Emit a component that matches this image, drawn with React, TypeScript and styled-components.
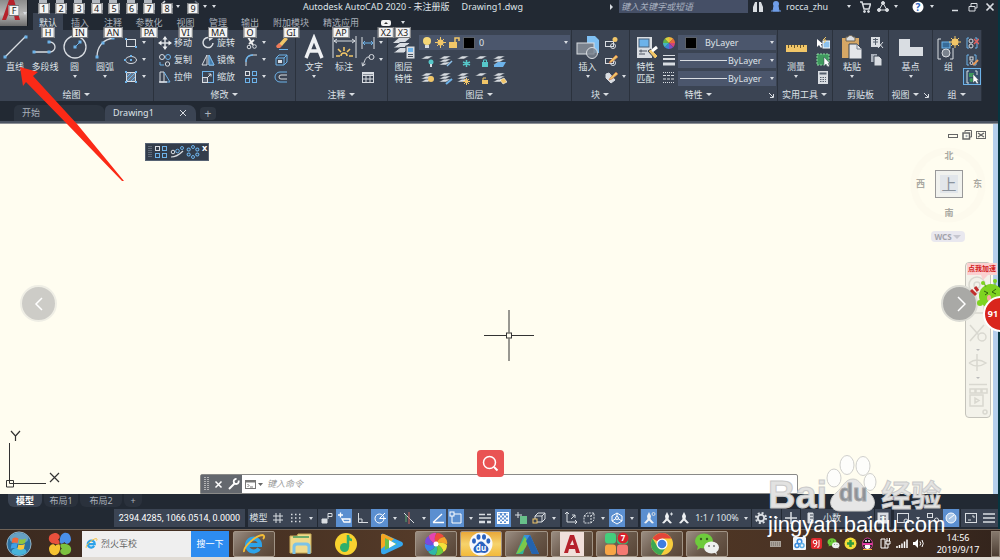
import React from 'react';
import styled, { createGlobalStyle, css } from 'styled-components';

const c = {
  dark: '#222933',
  panel: '#3b4453',
  field: '#4b566c',
  line: '#2b323d',
  text: '#dfe3e8',
  dim: '#a9b0ba',
  lt: '#d9dde2',
  blue: '#6db3ea',
  yellow: '#f1c668',
  active: '#5b8fd0',
  paper: '#fffdf0',
};

const Global = createGlobalStyle`
  * { box-sizing: border-box; }
  body { margin: 0; background: ${c.dark}; }
  body, button, input, select {
    font-family: "Noto Sans", "Noto Sans CJK SC", sans-serif;
    font-size: 9px;
    line-height: 12px;
  }
  button { border: 0; padding: 0; margin: 0; background: none; color: inherit; }
  svg { display: block; flex: none; }
`;

/* ---------- shared drawing helpers ---------- */

type SvgProps = { w?: number; h?: number; box?: string; children: React.ReactNode };
const Svg = ({ w = 14, h = 14, box, children }: SvgProps) => (
  <svg width={w} height={h} viewBox={box ?? `0 0 ${w} ${h}`} fill="none" stroke={c.lt} strokeWidth="1" aria-hidden="true">
    {children}
  </svg>
);

const Caret = styled.i<{ $w?: number }>`
  flex: none;
  width: ${(p) => p.$w ?? 8}px;
  height: 6px;
  display: flex;
  align-items: center;
  justify-content: center;
  &::before {
    content: '';
    border: 2px solid transparent;
    border-top: 3px solid ${c.lt};
    border-bottom: 0;
  }
`;

const Dots = ({ pts, s = 2 }: { pts: [number, number][]; s?: number }) => (
  <g fill={c.blue} stroke="none">
    {pts.map(([x, y]) => (
      <rect key={`${x}-${y}`} x={x - s / 2} y={y - s / 2} width={s} height={s} />
    ))}
  </g>
);

const Stack = ({ x = 0, y = 0, n = 3 }: { x?: number; y?: number; n?: number }) => (
  <g fill={c.lt} stroke={c.panel} strokeWidth=".5" transform={`translate(${x} ${y})`}>
    {Array.from({ length: n }, (_, i) => n - 1 - i).map((i) => (
      <path key={i} d={`M-1 ${3 + i * 3} L4 ${i * 3} H11 L6 ${3 + i * 3} Z`} />
    ))}
  </g>
);

/* ---------- ribbon icons ---------- */

const big = {
  line: <Svg w={26} h={26}><path d="M3 23 24 2" strokeWidth="1.3" /><Dots s={3} pts={[[3, 23], [24, 3]]} /></Svg>,
  pline: <Svg w={26} h={26}><path d="M2 18H18a5 5 0 0 0 0-10H17" strokeWidth="1.3" /><Dots s={3} pts={[[2, 18], [17, 18], [17, 8]]} /></Svg>,
  circle: <Svg w={26} h={26}><circle cx="13" cy="13" r="11" strokeWidth="1.3" /><path d="M13 13 18 8" stroke={c.blue} /><Dots s={3} pts={[[13, 13], [18, 8]]} /></Svg>,
  arc: <Svg w={26} h={26}><path d="M5 23C5 13 11 5 22 4" strokeWidth="1.3" /><Dots s={3} pts={[[5, 23], [11, 9], [21, 4]]} /></Svg>,
  text: <Svg w={26} h={26}><path d="M5 24 13 4 21 24M8 17H18" strokeWidth="3.400" stroke="#eef0f2" /></Svg>,
  dim: (
    <Svg w={26} h={26}>
      <path d="M2 2V24M25 2V24M3 7H24M6 5 3 7 6 9M21 5 24 7 21 9" />
      <path d="M5 22H9M18 22H22M13 13V17M7 15 10 18M19 15 16 18" stroke={c.yellow} strokeWidth="1.600" />
      <path d="M10 22a3 3 0 0 1 6 0" stroke={c.yellow} strokeWidth="1.500" />
    </Svg>
  ),
  layers: (
    <Svg w={26} h={26}>
      <g fill={c.lt} stroke="none"><path d="M2 9 9 3H20L13 9Z" /><path d="M2 14 9 8.500H20L13 14Z" stroke={c.panel} /><path d="M2 19 9 13.500H20L13 19Z" stroke={c.panel} /></g>
      <rect x="15" y="12" width="9" height="13" fill={c.lt} stroke={c.panel} /><rect x="17" y="14" width="5" height="4" fill={c.blue} stroke="none" /><path d="M17 20.500H22M17 22.500H22" stroke="#48515e" />
    </Svg>
  ),
  insert: (
    <Svg w={26} h={26}>
      <path d="M12 2H20L24 6V19H12Z" fill="#7fc0f3" stroke="none" />
      <rect x="2" y="9" width="17" height="11" fill="#7b838e" stroke={c.lt} />
      <circle cx="17" cy="19" r="5.500" fill="#7b838e" fillOpacity=".8" />
    </Svg>
  ),
  match: (
    <Svg w={26} h={26}>
      <rect x="4" y="3" width="15" height="21" fill={c.lt} stroke="none" /><rect x="6" y="5" width="10" height="8" fill={c.blue} stroke="#49617a" />
      <path d="M6 17H14M6 20H12M8 15.500V18.500" stroke="#48515e" />
      <path d="M15 17 18 15 25 22 22 25Z" fill={c.yellow} stroke={c.panel} /><path d="M19 17 24 13" stroke="#fff" strokeWidth="3" />
    </Svg>
  ),
  ruler: <Svg w={26} h={26}><rect x="3" y="11" width="21" height="7" fill={c.yellow} stroke="none" /><path d="M5.500 11V14M8.500 11V13M11.500 11V14M14.500 11V13M17.500 11V14M20.500 11V13" stroke="#6d5a2c" /></Svg>,
  paste: (
    <Svg w={26} h={26}>
      <rect x="3" y="4" width="17" height="20" fill="#d6a765" stroke="none" /><path d="M7 3H9C9 1 14 1 14 3H16V7H7Z" fill="#d9dde2" stroke="#6d6250" />
      <path d="M10 10H18L23 15V25H10Z" fill="#e4e6e9" stroke={c.panel} /><path d="M18 10V15H23" stroke="#78808c" />
    </Svg>
  ),
  base: <Svg w={26} h={26}><path d="M1 5H12V13H25V22H1Z" fill={c.lt} stroke="none" /></Svg>,
  group: (
    <Svg w={26} h={26}>
      <path d="M5 5H2V25H5M14 25H17V14" /><rect x="6" y="8" width="8" height="6" fill="#376b98" stroke={c.blue} />
      <circle cx="10" cy="19" r="4" fill="#7b838e" /><circle cx="19" cy="8" r="3.500" fill={c.yellow} stroke="none" />
      <path d="M19 2V14M13 8H25M15 4 23 12M23 4 15 12" stroke={c.yellow} />
    </Svg>
  ),
};

const pencil = <path d="M6 8 12 2 14 4 8 9 5 10Z" fill={c.yellow} stroke="#c96a42" strokeWidth=".6" />;
const cursor = <path d="M8 4V13L10 11 12 14 13.500 13 12 10.500H14Z" fill="#fff" stroke={c.panel} strokeWidth=".5" />;

const sm = {
  rect: <Svg><rect x="2.500" y="3.500" width="9" height="7" /><Dots pts={[[2, 3], [12, 11]]} /></Svg>,
  ellipse: <Svg><ellipse cx="7" cy="7" rx="5.500" ry="3.500" /><Dots pts={[[7, 7], [1, 7], [7, 3]]} /></Svg>,
  hatch: <Svg><rect x="2.500" y="2.500" width="9" height="9" fill="#66788d" /><path d="M3 7 7 3M3 11 11 3M7 11 11 7" stroke={c.blue} /><Dots pts={[[2, 2], [12, 2], [2, 12], [12, 12]]} /></Svg>,
  move: <Svg><path d="M7 2V12M2 7H12" strokeWidth="1.500" /><path d="M7 0 9.500 3.500H4.500ZM7 14 4.500 10.500H9.500ZM0 7 3.500 4.500V9.500ZM14 7 10.500 9.500V4.500Z" fill="#eef0f2" stroke="none" /></Svg>,
  rotate: <Svg><path d="M9 2A5 5 0 1 0 12 7" strokeWidth="1.500" /><path d="M8 0 12 2.500 8 5Z" fill={c.lt} stroke="none" /></Svg>,
  trim: <Svg><path d="M4 1 9 9M10 4 5 8" strokeWidth="2" stroke="#f0f0f0" /><circle cx="5" cy="11" r="1.800" /><circle cx="10.500" cy="10.500" r="1.800" /></Svg>,
  erase: <Svg><path d="M4 9 11 1 14 3 8 10Z" fill={c.yellow} stroke="none" /><path d="M2 10 5 7 8 10 6 12H3Z" fill="#ef7b5a" stroke="none" /><path d="M5 13.500H14" stroke={c.blue} /></Svg>,
  copy: <Svg><circle cx="4" cy="4" r="2.500" /><circle cx="10" cy="4" r="2.500" stroke={c.blue} /><path d="M2 9V12H6" stroke={c.blue} /><circle cx="9.500" cy="11" r="2.200" /></Svg>,
  mirror: <Svg><path d="M6 2V12H1ZM8 2V12H13Z" /><path d="M8 2V12H13Z" fill="#467ba8" stroke={c.blue} /></Svg>,
  fillet: <Svg><path d="M2 13V9C2 4 5 2 9 2H13" /><path d="M2 9C2 4 5 2 9 2" stroke={c.blue} strokeWidth="1.500" /></Svg>,
  explode: <Svg><path d="M2 5 5 2H13V9L10 12H2ZM2 5H10V12M10 5 13 2" stroke={c.blue} /><rect x="4" y="7" width="4" height="3" fill={c.lt} stroke="none" /></Svg>,
  stretch: <Svg><path d="M2 2H6V12H2Z" /><path d="M6 2 12 12H6" stroke={c.blue} /><path d="M1 12H9" strokeWidth="1.500" /></Svg>,
  scale: <Svg><rect x="1.500" y="1.500" width="11" height="11" stroke={c.blue} /><rect x="1.500" y="7.500" width="5" height="5" fill="#5a6474" /><path d="M7 7 10 4M7.500 4H10V6.500" /></Svg>,
  array: <Svg><g stroke={c.blue}><rect x="1.500" y="1.500" width="4" height="4" stroke={c.lt} /><rect x="8.500" y="1.500" width="4" height="4" /><rect x="1.500" y="8.500" width="4" height="4" /><rect x="8.500" y="8.500" width="4" height="4" /></g></Svg>,
  offset: <Svg><path d="M13 2H6A5 5 0 0 0 6 12H13" stroke={c.blue} /><path d="M13 5H7A2 2 0 0 0 7 9H13" /></Svg>,
  linear: <Svg><path d="M1 1V13M13 1V13" /><path d="M2 7H12M4 5 2 7 4 9M10 5 12 7 10 9" stroke={c.blue} /></Svg>,
  leader: <Svg><circle cx="10.500" cy="4" r="2.500" /><path d="M8 4C4 4 4 8 2 12M1 9.500 1.500 13 4.500 11" /></Svg>,
  table: <Svg><rect x="1.500" y="2.500" width="11" height="10" /><path d="M1 5.500H13M1 9H13M5 5V12M9 5V12" /><path d="M2 3.500H12" strokeWidth="2" /></Svg>,
  blkNew: <Svg><rect x="1.500" y="5.500" width="8" height="5" /><circle cx="9" cy="10" r="2.500" /><circle cx="11" cy="3.500" r="2.500" fill={c.yellow} stroke="none" /></Svg>,
  blkEdit: <Svg><rect x="1.500" y="5.500" width="8" height="5" /><circle cx="9" cy="10" r="2.500" />{pencil}</Svg>,
  blkAttr: <Svg><path d="M2 4 5 3 11 10 7 13 2 8Z" fill={c.lt} />{pencil}</Svg>,
  select: <Svg><rect x="7" y="5" width="7" height="7" fill="#8cc1ec" stroke="#fff" /><path d="M10 1 7 4H10L8 7" stroke={c.yellow} /><path d="M1 3V11L3 9 5 12 6 11 5 8H7Z" fill="#fff" stroke="none" /></Svg>,
  quick: <Svg><rect x="1" y="1" width="12" height="11" fill="#3f9a5e" stroke="#8fd6a2" strokeDasharray="2 1" />{cursor}</Svg>,
  calc: <Svg><rect x="2" y="1" width="10" height="13" fill={c.lt} stroke="none" /><rect x="3.500" y="2.500" width="7" height="2" fill="#56606e" stroke="none" /><path d="M4 7.500H10M4 9.500H10M4 11.500H10" stroke="#56606e" strokeDasharray="1.500 1" /></Svg>,
  cut: <Svg><path d="M1 1H10V11H1Z" fill={c.lt} stroke="none" /><path d="M3 3.500H8M3 6H8M5.500 2V9" stroke="#56606e" /><path d="M8 6 13 12M13 6 8 12" /></Svg>,
  copyDoc: <Svg><path d="M1 1H7V9H1Z" fill="#aab1bb" stroke="none" /><path d="M4 3H9L12 6V13H4Z" fill={c.lt} stroke={c.panel} /></Svg>,
  ungroup: <Svg><path d="M4 2H2V12H4M10 12H12V2H10" stroke={c.blue} /><circle cx="6" cy="5" r="2" /><circle cx="6" cy="10" r="2" /><path d="M9 3 14 8M14 3 9 8" stroke="#e06060" strokeWidth="1.500" /></Svg>,
  grpEdit: <Svg><path d="M4 2H2V12H4M9 2H11V12H9" stroke={c.blue} /><rect x="5" y="4" width="3" height="3" /><circle cx="6.500" cy="10" r="1.500" /><path d="M8 12 13 7" stroke="#e89a5a" strokeWidth="2" /></Svg>,
  grpSel: <Svg><path d="M4 1H2V13H4M10 1H12V5" /><rect x="4" y="3" width="5" height="4" fill="#3f9a5e" stroke="none" /><circle cx="6.500" cy="10" r="2" fill="#3f9a5e" stroke="none" />{cursor}</Svg>,
  wheel: (
    <Svg w={14} h={14}>
      <g stroke="none">
        {['#f3b13c', '#e8683c', '#d2447a', '#7c4fc2', '#3c7fd6', '#45b5c0', '#5fb54b', '#d7d13f'].map((f, i) => (
          <path key={f} fill={f} transform={`rotate(${i * 45} 7 7)`} d="M7 7V1A6 6 0 0 1 11.300 2.700Z" />
        ))}
      </g>
    </Svg>
  ),
  weight: <Svg><path d="M1 2.500H13" /><path d="M1 6H13" strokeWidth="2" /><path d="M1 11H13" strokeWidth="3" /></Svg>,
  ltype: <Svg><path d="M1 2.500H13M1 12.500H13" strokeDasharray="1 1" /><path d="M1 5.500H13M1 9H13" strokeDasharray="3 1" /></Svg>,
};

const layerIcon = (extra: React.ReactNode, n = 3, y = 2) => <Svg w={14} h={14}><Stack x={1} y={y} n={n} />{extra}</Svg>;
const layerRows = [
  [
    layerIcon(<><circle cx="10" cy="8" r="2.500" fill="#56c7c9" stroke="none" /><path d="M10 10V13" strokeWidth="2" /></>, 1),
    layerIcon(<path d="M8 12 13 7" stroke="#8cc1ec" strokeWidth="1.500" />),
    layerIcon(<path d="M9.500 6V13M6 8 13 11M13 8 6 11" stroke="#56c7c9" strokeWidth="1.500" />, 1),
    layerIcon(<><rect x="7" y="8" width="6" height="5" fill="#56c7c9" stroke="none" /><path d="M8.500 8V6H11.500V8" stroke="#56c7c9" /></>, 1),
    layerIcon(<path d="M1 11 5 8H13L10 13H1Z" fill={c.blue} stroke="none" />),
  ],
  [
    layerIcon(<circle cx="10" cy="8" r="3" fill={c.yellow} stroke="none" />),
    layerIcon(<path d="M7 13 13 8" stroke={c.blue} strokeWidth="2" />),
    layerIcon(<path d="M9.500 7V14M6 10.500H13M7 8 12 13M12 8 7 13" stroke={c.yellow} />),
    layerIcon(<><rect x="7" y="9" width="6" height="4" fill={c.yellow} stroke="none" /><path d="M8 9V7H11" stroke={c.yellow} /></>, 1),
    layerIcon(<path d="M7 9 11 7 14 11 10 13Z" fill={c.yellow} stroke="#fff" strokeWidth=".6" />),
  ],
];

/* ---------- window frame ---------- */

const Page = styled.div`
  position: relative;
  min-height: 100vh;
  display: flex;
  flex-direction: column;
  overflow: hidden;
  color: ${c.text};
`;
const Desktop = styled.div`
  flex: 1;
  display: flex;
  background: #063640;
  padding-right: 2px;
`;
const Cad = styled.main`
  flex: 1;
  min-width: 0;
  display: flex;
  flex-direction: column;
  background: ${c.dark};
`;

const Head = styled.header`
  display: flex;
  height: 30px;
`;
const AppButton = styled.button`
  width: 28px;
  height: 26px;
  display: flex;
  align-items: center;
  background: linear-gradient(#8b8b8b, #b9b9b9 55%, #6d6d6d);
  border-right: 1px solid #161a20;
  position: relative;
`;
const HeadRows = styled.div`
  flex: 1;
  min-width: 0;
`;
const TitleBar = styled.div`
  display: flex;
  align-items: center;
  height: 13px;
  padding-left: 7px;
  white-space: nowrap;
`;
const Chip = styled.span`
  position: absolute;
  z-index: 2;
  left: 50%;
  top: 3px;
  transform: translateX(-50%);
  min-width: 11px;
  padding: 0 2px;
  height: 11px;
  line-height: 9px;
  text-align: center;
  color: #222;
  background: #f4f4f4;
  border: 1px solid #77797c;
`;
const QatButton = styled.button<{ $w?: number }>`
  position: relative;
  flex: none;
  width: ${(p) => p.$w ?? 18}px;
  height: 13px;
  display: flex;
  justify-content: center;
  ${Chip} { top: 3px; }
`;
const Title = styled.h1`
  flex: 1;
  margin: 0;
  padding-left: 83px;
  font-size: 9px;
  font-weight: 400;
  line-height: 12px;
  display: flex;
  gap: 12px;
`;
const Search = styled.input`
  width: 129px;
  height: 13px;
  border: 0;
  padding: 0 2px;
  background: #454f66;
  font-style: italic;
  color: ${c.text};
  &::placeholder { color: #a9b1c0; }
`;
const TitleItem = styled.button<{ $w: number }>`
  flex: none;
  width: ${(p) => p.$w}px;
  height: 13px;
  display: flex;
  align-items: center;
  justify-content: center;
`;
const RibbonTabs = styled.nav`
  display: flex;
  height: 17px;
  padding-left: 5px;
`;
const RibbonTab = styled.button<{ $w: number; $on?: boolean }>`
  position: relative;
  flex: none;
  width: ${(p) => p.$w}px;
  height: 17px;
  padding-top: 2px;
  display: flex;
  align-items: center;
  justify-content: center;
  color: ${(p) => (p.$on ? c.text : c.dim)};
  background: ${(p) => (p.$on ? c.panel : 'none')};
  ${Chip} { top: 14px; }
`;

/* ---------- ribbon ---------- */

const Ribbon = styled.section`
  display: grid;
  grid-template-columns: 154fr 142fr 92fr 184fr 58fr 148fr 55fr 56fr 44fr 49fr;
  margin-right: 16px;
  height: 71px;
`;
const PanelBox = styled.section`
  display: flex;
  flex-direction: column;
  min-width: 0;
  background: ${c.panel};
  border-right: 1px solid ${c.line};
`;
const PanelBody = styled.div<{ $pad?: number }>`
  flex: 1;
  display: flex;
  align-items: flex-start;
  padding: 2px 0 0 ${(p) => p.$pad ?? 0}px;
`;
const PanelTitle = styled.footer<{ $launch?: boolean }>`
  position: relative;
  height: 13px;
  padding-right: ${(p) => (p.$launch ? 10 : 0)}px;
  display: flex;
  align-items: center;
  justify-content: center;
  gap: 2px;
  white-space: nowrap;
  ${Caret}::before { border-width: 3px 3px 0; }
`;
const Launcher = styled.button`
  position: absolute;
  right: 3px;
  top: 5px;
`;
const BigButton = styled.button<{ $w: number }>`
  flex: none;
  width: ${(p) => p.$w}px;
  display: flex;
  flex-direction: column;
  align-items: center;
  white-space: nowrap;
  padding-top: 2px;
  & > span { margin-top: 1px; }
  & > span + span { margin-top: 0; }
`;
const Col = styled.div<{ $ml?: number }>`
  flex: none;
  display: flex;
  flex-direction: column;
  margin: 2px 0 0 ${(p) => p.$ml ?? 0}px;
`;
const Small = styled.button<{ $on?: boolean }>`
  display: flex;
  align-items: center;
  height: 17px;
  white-space: nowrap;
  & > svg { margin: 0 2px; }
  ${(p) => p.$on && css`background: #35506b; box-shadow: inset 0 0 0 1px ${c.blue};`}
`;
const IconRow = styled.div`
  display: flex;
  height: 17px;
`;
const Field = styled.label<{ $w: number }>`
  display: flex;
  align-items: center;
  gap: 1px;
  width: ${(p) => p.$w}px;
  height: 15px;
  margin: 1px 0 2px;
  padding-left: 2px;
  background: ${c.field};
`;
const Drop = styled.select`
  flex: 1;
  min-width: 0;
  height: 15px;
  border: 0;
  padding: 0;
  appearance: none;
  background: none;
  color: ${c.text};
`;
const Swatch = styled.i`
  width: 12px;
  height: 12px;
  background: #000;
  border: 1px solid #5b6068;
  margin: 0 3px 0 2px;
`;
const Rule = styled.i`
  width: 47px;
  height: 1px;
  background: ${c.lt};
`;

const Panel = ({ title, pad, caret = true, launch, children }: { title: string; pad?: number; caret?: boolean; launch?: boolean; children: React.ReactNode }) => (
  <PanelBox>
    <PanelBody $pad={pad}>{children}</PanelBody>
    <PanelTitle $launch={launch}>
      {title}
      {caret && <Caret />}
      {launch && <Launcher aria-label={`${title}设置`}><Svg w={5} h={5}><path d="M0 0 4 4M4.500 1V4.500H1" /></Svg></Launcher>}
    </PanelTitle>
  </PanelBox>
);

const Big = ({ icon, label, w, caret }: { icon: keyof typeof big; label: string[]; w: number; caret?: boolean }) => (
  <BigButton $w={w}>
    {big[icon]}
    {label.map((t) => <span key={t}>{t}</span>)}
    {caret && <Caret />}
  </BigButton>
);
const Sm = ({ icon, label, caret, on }: { icon: keyof typeof sm; label?: string; caret?: boolean; on?: boolean }) => (
  <Small $on={on} aria-label={label ?? icon}>
    {sm[icon]}
    {label}
    {caret && <Caret />}
  </Small>
);

/* ---------- document tabs ---------- */

const DocTabs = styled.nav`
  display: flex;
  align-items: flex-end;
  height: 20px;
  padding-left: 14px;
`;
const DocTab = styled.button<{ $on?: boolean }>`
  width: 91px;
  height: 16px;
  display: flex;
  align-items: center;
  justify-content: space-between;
  padding: 0 8px;
  color: ${(p) => (p.$on ? c.text : c.dim)};
  background: ${(p) => (p.$on ? c.panel : '#2c343f')};
  border-radius: 5px 8px 0 0;
`;
const AddTab = styled.button`
  width: 16px;
  height: 13px;
  margin: 0 0 1px 4px;
  border-radius: 4px;
  background: #2f3742;
  color: ${c.dim};
  font-size: 12px;
`;
const CanvasTop = styled.div`
  height: 3px;
  background: #4b5361;
  border-bottom: 1px solid #8d9095;
`;

/* ---------- drawing canvas ---------- */

const CanvasRow = styled.div`
  flex: 1;
  display: flex;
  padding-right: 5px;
  background: #b5cfec;
`;
const Canvas = styled.section`
  position: relative;
  flex: 1;
  background: ${c.paper};
`;
const Float = styled.div<{ $l?: number; $r?: number; $t?: number; $b?: number }>`
  position: absolute;
  ${(p) => p.$l !== undefined && `left: ${p.$l}px;`}
  ${(p) => p.$r !== undefined && `right: ${p.$r}px;`}
  ${(p) => p.$t !== undefined && `top: ${p.$t}px;`}
  ${(p) => p.$b !== undefined && `bottom: ${p.$b}px;`}
`;
const MiniBar = styled(Float)`
  display: flex;
  align-items: center;
  gap: 2px;
  width: 64px;
  height: 18px;
  padding-left: 2px;
  background: #333d4b;
  border: 1px solid #566273;
`;
const MiniClose = styled.button`
  align-self: flex-start;
  font-size: 9px;
  font-weight: 700;
  line-height: 8px;
  color: #fff;
`;
const WinButtons = styled(Float)`
  display: flex;
  gap: 4px;
`;
const Compass = styled(Float)`
  display: grid;
  grid-template-columns: 15px 28px 15px;
  grid-template-rows: 15px 28px 15px;
  gap: 7px;
  place-items: center;
  justify-content: center;
  width: 74px;
  color: #aaa9a2;
  font-weight: 700;
`;
const North = styled.span`grid-area: 1 / 2;`;
const West = styled.span`grid-area: 2 / 1;`;
const East = styled.span`grid-area: 2 / 3;`;
const South = styled.span`grid-area: 3 / 2;`;
const Cube = styled.button`
  grid-area: 2 / 2;
  width: 28px;
  height: 28px;
  border: 1px solid #999;
  background: #e2e6ea;
  color: #8b939c;
  font-size: 15px;
  line-height: 20px;
  box-shadow: inset 0 0 0 4px #f1f2ee;
`;
const Wcs = styled.button`
  display: flex;
  align-items: center;
  justify-content: center;
  width: 34px;
  height: 11px;
  border-radius: 4px;
  background: #e9e8ef;
  color: #a3a3ab;
  font-size: 8px;
  font-weight: 700;
  ${Caret}::before { border-top-color: #c6c6cf; border-width: 4px 4px 0; }
`;
const NavBar = styled(Float)`
  width: 26px;
  height: 156px;
  border: 1px solid #c4c3bb;
  border-radius: 4px;
  background: #f3f2ea;
  display: flex;
  justify-content: center;
`;
const Round = styled.button<{ $soft?: boolean }>`
  width: 37px;
  height: 37px;
  border-radius: 50%;
  border: 2px solid ${(p) => (p.$soft ? '#efeee5' : '#dcdcd5')};
  background: ${(p) => (p.$soft ? '#cdccc7' : '#a9a9a6')};
  display: flex;
  align-items: center;
  justify-content: center;
`;
const RedSearch = styled.button`
  width: 27px;
  height: 27px;
  border-radius: 4px;
  background: #e95353;
  display: flex;
  align-items: center;
  justify-content: center;
`;
const Command = styled(Float)`
  right: 195px;
  display: flex;
  height: 20px;
  border: 1px solid #8a8a88;
  border-radius: 2px 2px 0 0;
  background: #fff;
`;
const CommandGrip = styled.div`
  width: 41px;
  display: flex;
  align-items: center;
  justify-content: space-around;
  background: #64686e;
`;
const CommandInput = styled.input`
  flex: 1;
  border: 0;
  padding: 0;
  background: none;
  &::placeholder { color: #9a9a9a; font-style: italic; }
`;

/* ---------- bottom bars ---------- */

const LayoutTabs = styled.nav`
  display: flex;
  height: 14px;
  padding-left: 8px;
`;
const LayoutTab = styled.button<{ $on?: boolean; $w: number }>`
  width: ${(p) => p.$w}px;
  height: 13px;
  border-radius: 0 0 6px 6px;
  color: ${(p) => (p.$on ? '#fff' : c.dim)};
  font-weight: ${(p) => (p.$on ? 700 : 400)};
  background: ${(p) => (p.$on ? c.panel : '#2a313c')};
  margin-right: 2px;
`;
const Status = styled.footer`
  display: flex;
  justify-content: flex-end;
  height: 21px;
  padding: 1px 0 2px;
  white-space: nowrap;
`;
const Coords = styled.output`
  width: 131px;
  margin-right: 3px;
  font-family: Roboto, sans-serif;
  line-height: 18px;
  text-align: center;
  color: #fff;
  background: ${c.panel};
`;
const StatusButton = styled.button<{ $w: number; $on?: boolean }>`
  flex: none;
  width: ${(p) => p.$w}px;
  height: 18px;
  display: flex;
  align-items: center;
  justify-content: center;
  background: ${c.panel};
  ${(p) => p.$on && css`background: ${c.active}; box-shadow: inset 1px 0 ${c.panel}, inset -1px 0 ${c.panel};`}
`;
const Gap = styled.i<{ $w: number }>`
  flex: none;
  width: ${(p) => p.$w}px;
`;

const Taskbar = styled.footer`
  display: flex;
  align-items: center;
  height: 28px;
  padding: 1px 0;
  background: linear-gradient(90deg, #3b2a20, #4a3324 30%, #5b402c 50%, #4d3524 72%, #4a3325 80%, #33241c);
  border-top: 1px solid #6f6257;
`;
const Task = styled.button<{ $w: number; $open?: boolean; $hot?: boolean }>`
  flex: none;
  width: ${(p) => p.$w}px;
  height: 26px;
  display: flex;
  align-items: center;
  justify-content: center;
  ${(p) => p.$open && css`
    margin-right: 3px;
    border: 1px solid #a09385;
    border-radius: 2px;
    background: linear-gradient(135deg, #9a8d82, #6b5a4c 50%, #584536);
  `}
  ${(p) => p.$hot && css`background: linear-gradient(#e8a73a, #f6d36c 50%, #f3b93a);`}
`;
const WebSearch = styled.form`
  display: flex;
  width: 147px;
  height: 26px;
  margin-right: 4px;
  background: #efefef;
  align-items: center;
  padding-left: 3px;
`;
const WebInput = styled.input`
  flex: 1;
  min-width: 0;
  border: 0;
  background: none;
  color: #666;
  padding: 0 3px;
`;
const WebGo = styled.button`
  width: 38px;
  height: 26px;
  background: #2d8cf0;
  color: #fff;
`;
const Tray = styled.div`
  margin-left: auto;
  display: flex;
  align-items: center;
  gap: 4px;
`;
const Clock = styled.time`
  width: 58px;
  text-align: center;
  color: #fff;
  & > span { display: block; }
`;
const ShowDesktop = styled.button`
  width: 9px;
  height: 26px;
  border: 1px solid #8d8073;
  background: linear-gradient(#85786c, #4c3d32);
`;
const Base = styled.div`
  height: 3px;
  background: #e0dbd4;
`;

/* ---------- watermark ---------- */

const Watermark = styled.div`
  position: absolute;
  right: 54px;
  bottom: 22px;
  width: 178px;
  color: #e2e2e1;
  font-family: "Liberation Sans", "Noto Sans CJK SC", sans-serif;
  pointer-events: none;
`;
const Brand = styled.div`
  display: flex;
  align-items: flex-end;
  height: 58px;
  font-weight: 700;
  font-size: 38px;
  line-height: 34px;
  white-space: nowrap;
  -webkit-text-stroke: 1px #c9c9c9;
`;
const BrandCjk = styled.span`
  margin-left: 4px;
  font-size: 30px;
  line-height: 32px;
`;
const Paw = styled.div`
  position: relative;
  width: 56px;
  height: 58px;
  margin-left: -6px;
`;
const Du = styled.span`
  position: absolute;
  inset: 22px 0 auto 8px;
  text-align: center;
  font-size: 23px;
  color: #8d9196;
  -webkit-text-stroke: 1px #a5a8ab;
`;
const Site = styled.div`
  height: 26px;
  font-size: 22px;
  line-height: 26px;
  color: #fff;
`;

/* ---------- data ---------- */

const disk = <Svg w={12} h={10}><path d="M1 0H9V3H12V10H4V8H1Z" fill="#b4b9c0" stroke="none" /></Svg>;
const undo = <Svg w={14} h={10}><path d="M2 4H9Q12 4 12 8M5 1 2 4 5 7" strokeWidth="1.500" /></Svg>;
const redo = <Svg w={14} h={10}><path d="M12 4H5Q2 4 2 8M9 1 12 4 9 7" strokeWidth="1.500" stroke="#6b7482" /></Svg>;
const qat: [string, number][] = [['1', 17], ['2', 18], ['3', 18], ['4', 17], ['5', 18], ['6', 17], ['7', 18], ['8', 18]];
const tabs: [string, string, number][] = [
  ['默认', 'H', 30], ['插入', 'IN', 34], ['注释', 'AN', 32], ['参数化', 'PA', 40], ['视图', 'VI', 33],
  ['管理', 'MA', 32], ['输出', 'O', 32], ['附加模块', 'GI', 50], ['精选应用', 'AP', 50],
];

type St = { w: number; on?: boolean; el: React.ReactNode };
const caret = (w: number): St => ({ w, el: <Caret /> });
const person = (extra?: React.ReactNode) => <Svg w={14} h={14}><path d="M7 1 9 5 8.500 8 12 12 10 12.500 7 9.500 4 12.500 2 12 5.500 8 5 5Z" fill="#eef0f2" stroke="none" />{extra}</Svg>;
const status: (St | number)[] = [
  { w: 21, el: '模型' }, { w: 18, el: <Svg w={12} h={12}><path d="M4 1V11M8 1V11M1 4H11M1 8H11" /></Svg> },
  { w: 18, el: <Svg w={12} h={12}><path d="M1 2.500H11M1 6H11M1 9.500H11" strokeWidth="1.500" strokeDasharray="1.500 2.500" /></Svg> }, caret(12), 1,
  { w: 17, el: <Svg w={12} h={12}><path d="M1 7H6V11H1Z" fill={c.lt} /><path d="M7 7V1.500H11V4.500H7" /></Svg> },
  { w: 18, on: true, el: <Svg w={14} h={14}><path d="M1 4H6M3.500 1.500V6.500M5 8H13V11H7Z" stroke="#fff" strokeWidth="1.300" /></Svg> },
  { w: 17, el: <Svg w={12} h={12}><path d="M2.500 1V10.500H12M2 7H6V11" /></Svg> },
  { w: 19, on: true, el: <Svg w={14} h={14}><circle cx="6.500" cy="7.500" r="4.500" stroke="#fff" /><path d="M6.500 7.500 12 2M6.500 7.500H13" stroke="#fff" /></Svg> }, caret(11),
  { w: 18, el: <Svg w={14} h={14}><path d="M2 2 12 12" /><path d="M7 1V13" stroke="#d0605a" /><path d="M4 4V11" stroke="#58a56a" /></Svg> }, caret(11),
  { w: 18, on: true, el: <Svg w={14} h={14}><path d="M2 11.500H13M2 11.500 11 3" stroke="#fff" strokeWidth="1.300" /></Svg> },
  { w: 18, on: true, el: <Svg w={14} h={14}><path d="M3 3H12V12H3Z" stroke="#fff" /><rect x="1" y="1" width="4" height="4" fill="#5b8fd0" stroke="#fff" /></Svg> }, caret(11),
  { w: 18, el: <Svg w={12} h={12}><path d="M0 2.500H6M8 2.500H12M0 6H12" strokeWidth="1.500" /><path d="M0 10H6M8 10H12" strokeWidth="2.500" /></Svg> },
  { w: 18, on: true, el: <Svg w={12} h={12}><rect x=".5" y=".5" width="11" height="11" stroke="#fff" /><path d="M1 2.500H11M1 6.500H11M1 10H11" strokeDasharray="2 2" stroke="#fff" strokeWidth="2" /><path d="M3 4.500H11M3 8.500H11" strokeDasharray="2 2" stroke="#fff" strokeWidth="2" /></Svg> },
  { w: 18, el: <Svg w={12} h={12}><rect x="5" y="4" width="7" height="8" fill="#68c08a" stroke="none" /><path d="M0 3H7M3 0V6" /></Svg> },
  { w: 18, el: <Svg w={14} h={14}><path d="M3 5 6 2H13V8L10 11H3ZM3 5H10V11M10 5 13 2" /><rect x="1" y="8" width="4" height="4" fill={c.panel} stroke={c.yellow} /></Svg> }, caret(12), 2,
  { w: 18, el: <Svg w={14} h={14}><path d="M3 1V11H13M1 3 3 1 5 3M11 9 13 11 11 13M7 8 11 4M8 4H11V7" /></Svg> },
  { w: 17, el: <Svg w={14} h={14}><path d="M2 5 5 2H12V9L9 12H2ZM2 5H9V12M9 5 12 2" strokeDasharray="2 1" /></Svg> }, caret(11),
  { w: 18, on: true, el: <Svg w={14} h={14}><path d="M7 2 12 5V10L7 13 2 10V5ZM7 2V7M2 10 7 7 12 10" stroke="#fff" /><circle cx="7" cy="7" r="1.500" stroke="#fff" fill="#5b8fd0" /></Svg> }, caret(12), 2,
  { w: 18, on: true, el: person(<circle cx="11.500" cy="3" r="1.500" />) }, { w: 17, el: person(<path d="M10 3H13M11.500 1.500V4.500" />) }, { w: 18, el: person() },
  { w: 48, el: '1:1 / 100%' }, caret(10), 1,
  { w: 18, el: <Svg w={14} h={14}><circle cx="7" cy="7" r="3.200" strokeWidth="2" /><circle cx="7" cy="7" r="5" strokeWidth="2" strokeDasharray="2 1.930" /></Svg> }, caret(11), 1,
  { w: 18, el: <Svg w={14} h={14}><path d="M7 1V13M1 7H13" strokeWidth="1.500" /></Svg> }, 1,
  { w: 18, el: <Svg w={12} h={12}><path d="M4 1H9V11H4Z" fill={c.lt} /><path d="M6 3H9M6 6H9M6 9H9" stroke={c.panel} /></Svg> },
  { w: 26, el: '小数' }, { w: 18, el: null }, caret(11), 1,
  { w: 16, el: <Svg w={12} h={12}><rect x="1" y="1" width="10" height="10" fill={c.lt} /><path d="M3 4H9M3 7H9M6 4V10" stroke={c.panel} /></Svg> }, 3,
  { w: 18, el: <Svg w={12} h={12}><rect x=".5" y="1.500" width="11" height="9" /><circle cx="9" cy="9" r="2" fill={c.panel} /></Svg> }, caret(12),
  { w: 18, el: <Svg w={14} h={14}><rect x="1.500" y="2.500" width="5" height="4" /><circle cx="10.500" cy="9" r="2" /></Svg> },
  { w: 18, on: true, el: <Svg w={14} h={14}><circle cx="7" cy="7" r="5" fill="#a8c6e8" stroke="#fff" /><path d="M5 8 10 4" stroke="#fff" /></Svg> }, 1,
  { w: 19, el: <Svg w={14} h={14}><rect x="1.500" y="2.500" width="11" height="9" /><path d="M4 9H7M10 5H8M10 5V7" /></Svg> },
  { w: 18, el: <Svg w={12} h={12}><path d="M0 2H12M0 6H12M0 10H12" strokeWidth="1.500" /></Svg> },
];

/* ---------- taskbar pictures ---------- */

const IeLogo = ({ s }: { s: number }) => (
  <Svg w={s} h={s} box="0 0 24 24">
    <path d="M5.500 13H18A6.500 6.500 0 1 0 17 16.500" stroke="#2ca3ea" strokeWidth="4" />
    <path d="M2 20C1 15 14 3 21 3C23 4 22 6 21 7" stroke="#f5bd35" strokeWidth="1.800" />
  </Svg>
);
const Petals = () => (
  <Svg w={24} h={24}>
    <g stroke="none">
      {['#e8503c', '#4a8fe8', '#7cc23f', '#f5c332'].map((f, i) => (
        <path key={f} fill={f} transform={`rotate(${i * 90} 12 12)`} d="M11.500 11.500C9 13 2 12 1 8C0 3 4 1 8 1C12 2 13 6 10 7.500C11 8 12 10 11.500 11.500Z" />
      ))}
    </g>
  </Svg>
);
const Orb = () => (
  <Svg w={28} h={26} box="0 0 28 28">
    <circle cx="14" cy="14" r="13" fill="#2b6f9f" stroke="#9bb9c9" />
    <ellipse cx="14" cy="8" rx="10" ry="6" fill="#8fc3dc" fillOpacity=".6" stroke="none" />
    <ellipse cx="14" cy="22" rx="8" ry="4" fill="#4fc6e8" fillOpacity=".8" stroke="none" />
    <g stroke="none"><path d="M7 8Q10 6 13.500 8L12.500 13Q9 11.500 6 13Z" fill="#f0683a" /><path d="M14.500 8.500Q18 10 21.500 8L20.500 13Q17 15 13.500 13.500Z" fill="#8fc63f" /><path d="M6 14Q9 12.500 12.300 14L11.300 19Q8 17.500 5 19Z" fill="#3fa0e8" /><path d="M13.300 14.500Q17 16 20.300 14L19.300 19Q16 21 12.300 19.500Z" fill="#fbc93a" /></g>
  </Svg>
);
const Folder = () => (
  <Svg w={24} h={22}><path d="M1 3H8L9 1H22V20H1Z" fill="#f0da8c" stroke="#c9ab56" /><path d="M4 4H20" stroke="#6cab6a" strokeWidth="2" /><path d="M5 21V14Q5 11 8 11H17Q20 11 20 14V21" stroke="#7cc3e8" strokeWidth="3" /></Svg>
);
const Music = () => (
  <Svg w={24} h={24}><circle cx="12" cy="12" r="11" fill="#f8d22f" stroke="none" /><circle cx="10.500" cy="15.500" r="4.500" fill="#2faf6b" stroke="none" /><path d="M14 15V3Q14 8 18 8" stroke="#2faf6b" strokeWidth="2.500" /></Svg>
);
const Player = () => (
  <Svg w={24} h={24}><g stroke="none"><path d="M1 3Q1 1 4 2L22 10Q24 12 22 14L5 22Q1 23 1 20Z" fill="#35a8ee" /><path d="M1 4Q1 1 4 2L14 7 1 17Z" fill="#f5a623" /><path d="M5 6 17 12 5 18Z" fill="#6ac04a" /><path d="M9 8 16 12 9 16Z" fill="#fff" /></g></Svg>
);
const Swirl = () => (
  <Svg w={24} h={24}>
    <g stroke="none">
      {['#f04a3c', '#f7a32b', '#f5e03a', '#6bcb3f', '#2fb8a8', '#3a83f0', '#7a49e0', '#e544b0'].map((f, i) => (
        <path key={f} fill={f} transform={`rotate(${i * 45} 12 12)`} d="M12 12Q9 5 13 1Q18 1 20 4.500Q14 6 12 12Z" />
      ))}
      <circle cx="12" cy="12" r="2.500" fill="#fff" />
    </g>
  </Svg>
);
const BaiduDot = () => (
  <Svg w={24} h={24}>
    <circle cx="12" cy="12" r="11.500" fill="#f7f8fb" stroke="none" />
    <g fill="#2a62c0" stroke="none"><ellipse cx="5" cy="9" rx="2" ry="2.700" /><ellipse cx="9.500" cy="5" rx="2" ry="2.800" /><ellipse cx="15" cy="5" rx="2" ry="2.800" /><ellipse cx="19.300" cy="9" rx="2" ry="2.700" /><path d="M12 9.500C15 9.500 15 12 18 14C21 17 19 21 15.500 21Q12 20 8.500 21C5 21 3 17 6 14C9 12 9 9.500 12 9.500Z" /></g>
    <text x="12" y="19" fontSize="8" fontWeight="700" textAnchor="middle" fill="#fff" stroke="none">du</text>
  </Svg>
);
const Autodesk = () => (
  <Svg w={24} h={22}><g stroke="none"><path d="M1 21 9 2H14L8 21Z" fill="#2fb59a" /><path d="M9 2H15L24 21H17Z" fill="#3b8ee0" /><path d="M1 21Q10 19 13 9L10 4Z" fill="#7cc84a" /><path d="M15 2 24 21H17L11 8Z" fill="#2463ae" /></g></Svg>
);
const AcadA = () => (
  <Svg w={24} h={24}><rect width="24" height="24" fill="#f0dfda" stroke="none" /><path d="M4 21 10 3H14L20 21H16L15 17H9L8 21ZM10 13H14L12.500 8Z" fill="#b5212b" fillRule="evenodd" stroke="none" /></Svg>
);
const Clover = () => (
  <Svg w={26} h={24}>
    <g stroke="none"><rect x="1" y="1" width="11" height="10.500" rx="3" fill="#43cf7c" /><rect x="13" y="2" width="11" height="10" rx="3" fill="#30c27a" /><rect x="1" y="12.500" width="11" height="10.500" rx="3" fill="#f8a545" /><rect x="13" y="12.500" width="11" height="10.500" rx="3" fill="#f47a72" /><circle cx="19" cy="6" r="5.500" fill="#d8202a" /></g>
    <text x="19" y="9" fontSize="8" fontWeight="700" textAnchor="middle" fill="#fff" stroke="none">7</text>
  </Svg>
);
const Chrome = () => (
  <Svg w={24} h={24}><g stroke="none"><circle cx="12" cy="12" r="11" fill="#f7cc3d" /><path d="M12 12 2.500 6.500A11 11 0 0 1 21.500 6.500H12Z" fill="#e2453a" /><path d="M2.500 6.500A11 11 0 0 0 11 23L16.500 14.500 12 16 7.500 14.500Z" fill="#3ea853" /><circle cx="12" cy="12" r="5.500" fill="#fff" /><circle cx="12" cy="12" r="4.300" fill="#3f7de0" /></g></Svg>
);
const Wechat = ({ s = 26 }: { s?: number }) => (
  <Svg w={s} h={s} box="0 0 26 24"><g stroke="none"><ellipse cx="10" cy="9" rx="9" ry="7.500" fill="#6ecb3c" /><path d="M4 14 3 18 8 15Z" fill="#6ecb3c" /><ellipse cx="17.500" cy="15.500" rx="7.500" ry="6" fill="#eef0ee" /><path d="M20 20 23 23 22 19Z" fill="#eef0ee" /><circle cx="7" cy="7" r="1.200" fill="#36601f" /><circle cx="13" cy="7" r="1.200" fill="#36601f" /><circle cx="15" cy="14" r="1" fill="#777" /><circle cx="20" cy="14" r="1" fill="#777" /></g></Svg>
);

const tray: [string, React.ReactNode][] = [
  ['网盘', <Svg w={13} h={13}><rect width="13" height="13" rx="1" fill="#f2f6fa" stroke="none" /><circle cx="6.500" cy="4.500" r="2.300" stroke="#3a8ce0" strokeWidth="1.500" /><circle cx="4" cy="8.500" r="2" stroke="#3a8ce0" strokeWidth="1.500" /><circle cx="9" cy="8.500" r="2" stroke="#5fb0e8" strokeWidth="1.500" /></Svg>],
  ['加速', <Svg w={13} h={13}><rect x="1" y="1" width="11" height="11" rx="2" fill="#de2a2f" stroke="none" /><circle cx="5" cy="5" r="1.800" stroke="#fff" /><path d="M7 5Q7 9 4 10M9 3V9Q9 11 7 10" stroke="#fff" /></Svg>],
  ['微信', <Wechat s={13} />],
  ['安全', <Svg w={13} h={13}><circle cx="6.500" cy="6.500" r="6" fill="#f4dd3a" stroke="none" /><path d="M6.500 3V10M3 6.500H10" stroke="#2f9a3c" strokeWidth="2.500" /></Svg>],
  ['QQ', <Svg w={13} h={13}><ellipse cx="6.500" cy="7" rx="5" ry="6" fill="#151515" stroke="#d13f9a" /><ellipse cx="6.500" cy="9.500" rx="2.800" ry="2.500" fill="#fff" stroke="none" /><path d="M2 7H11" stroke="#e23ca0" strokeWidth="2" /><path d="M2 12.500H11" stroke="#f3b13c" /><circle cx="5" cy="4" r="1" fill="#fff" stroke="none" /><circle cx="8" cy="4" r="1" fill="#fff" stroke="none" /></Svg>],
  ['电源', <Svg w={13} h={13}><path d="M3 2H7V11H3ZM9 1V4M11.500 1V4M8 4H12V7H8ZM10 7V11H7" stroke="#fff" /></Svg>],
  ['网络', <Svg w={13} h={13}><path d="M2 11V9M4.500 11V8M7 11V6.500M9.500 11V4.500M12 11V2.500" stroke="#fff" strokeWidth="1.500" /></Svg>],
  ['音量', <Svg w={13} h={13}><path d="M1 5H3L6 2V11L3 8H1Z" fill="#fff" stroke="none" /><path d="M8 4.500Q9.500 6.500 8 8.500M10 3Q12.500 6.500 10 10" stroke="#fff" /></Svg>],
];

export default function App() {
  return (
    <Page>
      <Global />
      <Desktop>
        <Cad>
          <Head>
            <AppButton aria-label="应用程序菜单">
              <Svg w={22} h={26}><path d="M2 20 9 0H14L20 20H15L14 15H8L6 20Z" fill="#b5212b" stroke="none" /></Svg>
              <Caret $w={5} />
              <Float $l={14} $t={2}><Chip>F</Chip></Float>
            </AppButton>
            <HeadRows>
              <TitleBar>
                {qat.map(([n, w]) => <QatButton key={n} $w={w}>{n === '8' ? undo : disk}<Chip>{n}</Chip></QatButton>)}
                <Caret $w={4} /><Gap $w={5} />
                <QatButton $w={16}>{redo}<Chip>9</Chip></QatButton>
                <Caret $w={7} />
                <Caret $w={12} />
                <Title><span>Autodesk AutoCAD 2020 - 未注册版</span><span>Drawing1.dwg</span></Title>
                <TitleItem $w={14} aria-label="展开"><Svg w={6} h={8}><path d="M1 1V7L4 4Z" fill={c.lt} stroke="none" /></Svg></TitleItem>
                <Search aria-label="搜索" placeholder="键入关键字或短语" />
                <TitleItem $w={20} aria-label="查找"><Svg w={12} h={12}><path d="M1 11V6L3 1H5V11ZM11 11V6L9 1H7V11ZM5 5H7" fill={c.lt} stroke="none" /></Svg></TitleItem>
                <TitleItem $w={16} aria-label="用户"><Svg w={12} h={12}><circle cx="6" cy="3" r="3" fill="#6f9de8" stroke="none" /><path d="M4 5H8L9 10H3ZM1 10H11" fill="#6f9de8" stroke="#6f9de8" /></Svg></TitleItem>
                <TitleItem $w={46}>rocca_zhu</TitleItem>
                <Gap $w={14} /><Caret $w={10} />
                <TitleItem $w={22} aria-label="购物车"><Svg w={12} h={12}><path d="M1 1H3L5 8H10L11.500 3H4" strokeWidth="1.500" /><circle cx="5.500" cy="10.500" r="1" fill={c.lt} /><circle cx="9.500" cy="10.500" r="1" fill={c.lt} /></Svg></TitleItem>
                <TitleItem $w={14} aria-label="共享"><Svg w={12} h={12}><path d="M6 2 2 9H10Z" /><circle cx="6" cy="2" r="1.500" fill={c.lt} /><circle cx="2" cy="9" r="1.500" fill={c.lt} /><circle cx="10" cy="9" r="1.500" fill={c.lt} /></Svg></TitleItem>
                <Caret $w={12} /><Gap $w={8} />
                <TitleItem $w={16} aria-label="帮助"><Svg w={12} h={12}><circle cx="6" cy="6" r="5.500" fill="#fff" stroke="none" /><text x="6" y="9.500" fontSize="10" fontWeight="700" textAnchor="middle" fill="#2a62c0" stroke="none">?</text></Svg></TitleItem>
                <Caret $w={12} /><Gap $w={7} />
                <TitleItem $w={19} aria-label="最小化"><Svg w={8} h={12}><path d="M1 9.500H7" strokeWidth="1.500" /></Svg></TitleItem>
                <TitleItem $w={18} aria-label="还原"><Svg w={10} h={10}><path d="M3 4V1.500H9V6H7M1 4.500H7V9H1Z" /></Svg></TitleItem>
                <TitleItem $w={16} aria-label="关闭"><Svg w={10} h={10}><path d="M1.500 1.500 8.500 8.500M8.500 1.500 1.500 8.500" strokeWidth="1.700" /></Svg></TitleItem>
              </TitleBar>
              <RibbonTabs>
                {tabs.map(([t, k, w], i) => <RibbonTab key={t} $w={w} $on={i === 0}>{t}<Chip>{k}</Chip></RibbonTab>)}
                <Gap $w={11} />
                <RibbonTab $w={18} aria-label="最小化功能区">
                  <Svg w={18} h={12}><rect x="4" y="3" width="10" height="6" rx="2" fill="#f4f4f4" stroke="none" /><path d="M7 7 9 5 11 7Z" fill="#333" stroke="none" /></Svg>
                  <Chip>X2</Chip>
                </RibbonTab>
                <RibbonTab $w={16} aria-label="功能区选项"><Caret /><Chip>X3</Chip></RibbonTab>
              </RibbonTabs>
            </HeadRows>
          </Head>

          <Ribbon>
            <Panel title="绘图">
              <Big icon="line" label={['直线']} w={30} />
              <Big icon="pline" label={['多段线']} w={30} />
              <Big icon="circle" label={['圆']} w={29} caret />
              <Big icon="arc" label={['圆弧']} w={32} caret />
              <Col $ml={1}><Sm icon="rect" caret /><Sm icon="ellipse" caret /><Sm icon="hatch" caret /></Col>
            </Panel>
            <Panel title="修改" pad={2}>
              <Col><Sm icon="move" label="移动" /><Sm icon="copy" label="复制" /><Sm icon="stretch" label="拉伸" /></Col>
              <Col $ml={7}><Sm icon="rotate" label="旋转" /><Sm icon="mirror" label="镜像" /><Sm icon="scale" label="缩放" /></Col>
              <Col $ml={7}><Sm icon="trim" caret /><Sm icon="fillet" caret /><Sm icon="array" caret /></Col>
              <Col $ml={4}><Sm icon="erase" /><Sm icon="explode" /><Sm icon="offset" /></Col>
            </Panel>
            <Panel title="注释" pad={3}>
              <Big icon="text" label={['文字']} w={30} caret />
              <Big icon="dim" label={['标注']} w={30} />
              <Col><Sm icon="linear" caret /><Sm icon="leader" caret /><Sm icon="table" /></Col>
            </Panel>
            <Panel title="图层">
              <Big icon="layers" label={['图层', '特性']} w={31} />
              <Col>
                <Field $w={151}>
                  <Svg w={12} h={13}><circle cx="6" cy="5" r="4" fill="#f6d777" stroke="none" /><rect x="4" y="9" width="4" height="3" fill={c.lt} stroke="none" /></Svg>
                  <Svg w={13} h={13}><circle cx="6.500" cy="6.500" r="3" fill={c.yellow} stroke="none" /><path d="M6.500 1V12M1 6.500H12M3 3 10 10M10 3 3 10" stroke={c.yellow} /></Svg>
                  <Svg w={12} h={13}><rect x="1" y="6" width="8" height="6" fill={c.yellow} stroke="none" /><path d="M7 6V2H11V5" stroke={c.yellow} strokeWidth="1.500" /></Svg>
                  <Swatch />
                  <Drop aria-label="图层"><option>0</option></Drop>
                  <Caret />
                </Field>
                {layerRows.map((r, i) => (
                  <IconRow key={i}>{r.map((ic, j) => <Small key={j} aria-label={`图层工具 ${i * 5 + j + 1}`}>{ic}</Small>)}</IconRow>
                ))}
              </Col>
            </Panel>
            <Panel title="块" pad={1}>
              <Big icon="insert" label={['插入']} w={29} caret />
              <Col><Sm icon="blkNew" /><Sm icon="blkEdit" /><Sm icon="blkAttr" caret /></Col>
            </Panel>
            <Panel title="特性" launch pad={1}>
              <Big icon="match" label={['特性', '匹配']} w={29} />
              <Col><Sm icon="wheel" /><Sm icon="weight" /><Sm icon="ltype" /></Col>
              <Col>
                <Field $w={98}><Gap $w={2} /><Swatch /><Gap $w={3} /><Drop aria-label="颜色"><option>ByLayer</option></Drop><Caret /></Field>
                <Field $w={98}><Rule /><Drop aria-label="线宽"><option>ByLayer</option></Drop><Caret /></Field>
                <Field $w={98}><Rule /><Drop aria-label="线型"><option>ByLayer</option></Drop><Caret /></Field>
              </Col>
            </Panel>
            <Panel title="实用工具" pad={2}>
              <Big icon="ruler" label={['测量']} w={32} caret />
              <Col $ml={2}><Sm icon="select" /><Sm icon="quick" /><Sm icon="calc" /></Col>
            </Panel>
            <Panel title="剪贴板" caret={false} pad={3}>
              <Big icon="paste" label={['粘贴']} w={32} caret />
              <Col><Sm icon="cut" /><Sm icon="copyDoc" /></Col>
            </Panel>
            <Panel title="视图" launch>
              <Big icon="base" label={['基点']} w={43} caret />
            </Panel>
            <Panel title="组" pad={1}>
              <Big icon="group" label={['组']} w={29} />
              <Col><Sm icon="ungroup" /><Sm icon="grpEdit" /><Sm icon="grpSel" on /></Col>
            </Panel>
          </Ribbon>

          <DocTabs>
            <DocTab>开始</DocTab>
            <DocTab $on>Drawing1<Svg w={10} h={10}><path d="M2 2 8 8M8 2 2 8" /></Svg></DocTab>
            <AddTab aria-label="新建选项卡">+</AddTab>
          </DocTabs>
          <CanvasTop />

          <CanvasRow>
            <Canvas>
              <MiniBar $l={145} $t={19}>
                <Svg w={4} h={14}><path d="M1 1V13M3 1V13" strokeDasharray="1 1" stroke="#8d97a5" /></Svg>
                {sm.array}
                <Svg><path d="M1 12Q7 12 13 6" strokeWidth="1.200" /><g stroke={c.blue}><circle cx="3" cy="7" r="1.800" stroke={c.lt} /><circle cx="7.500" cy="6" r="1.800" /><circle cx="12" cy="3" r="1.500" /></g></Svg>
                <Svg><g stroke={c.blue}>{[0, 60, 120, 180, 240, 300].map((a) => <circle key={a} cx="7" cy="2" r="1.500" transform={`rotate(${a} 7 7)`} />)}</g></Svg>
                <MiniClose aria-label="关闭工具栏">x</MiniClose>
              </MiniBar>
              <WinButtons $r={7} $t={6}>
                <Svg w={10} h={10}><rect x=".5" y="4.500" width="9" height="3" stroke="#666" /></Svg>
                <Svg w={10} h={10}><path d="M3 2V.5H9.500V7H8" stroke="#666" /><rect x="1" y="3" width="6.500" height="6" stroke="#666" strokeWidth="1.500" /><circle cx="4.500" cy="6" r="1" fill="#666" /></Svg>
                <Svg w={10} h={10}><rect x=".5" y="1.500" width="9" height="7" stroke="#666" /><path d="M2 3 8 7M8 3 2 7" stroke="#666" strokeWidth="1.500" /></Svg>
              </WinButtons>
              <Float $r={3} $t={19}>
                <Svg w={84} h={84}><circle cx="42" cy="42" r="34" stroke="#fdfaed" strokeWidth="7" /></Svg>
              </Float>
              <Compass $r={7} $t={24}>
                <North>北</North>
                <West>西</West>
                <Cube>上</Cube>
                <East>东</East>
                <South>南</South>
              </Compass>
              <Float $r={28} $t={107}><Wcs>WCS<Caret $w={10} /></Wcs></Float>

              <NavBar $r={2} $t={138}>
                <Svg w={24} h={154}>
                  <g stroke="#d9d8d0" strokeWidth="1.500">
                    <circle cx="11" cy="22" r="8" /><circle cx="11" cy="22" r="3" /><path d="M5 44Q4 38 11 38T18 44V50H5Z" />
                    <path d="M4 62 18 78M18 62 4 78" /><circle cx="16" cy="74" r="4" fill="#f3f2ea" /><path d="M11 91V108M3 100Q11 94 20 100Q11 106 3 100" />
                    <path d="M3 121.500H21" /><path d="M4 126H9V130H4ZM10 126H15V130H10ZM16 126H21V130H16ZM4 132H17V143H4ZM9 135V140L13 137.500Z" /><circle cx="19" cy="149" r="2" />
                  </g>
                  <path d="M10 86H14L12 88ZM10 114H14L12 116Z" fill="#bbb" stroke="none" />
                </Svg>
              </NavBar>

              <Float $l={484} $t={186}><Svg w={50} h={51}><path d="M25 0V22.500M25 28.500V51M0 25.500H22M28 25.500H50" stroke="#333" /><rect x="22.500" y="23" width="5" height="5" stroke="#333" /></Svg></Float>
              <Float $l={5} $b={4}><Svg w={60} h={60}><path d="M4.500 13V53.500H41M1.500 50.500H8.500V57H1.500Z" stroke="#333" /><path d="M6 1 10.500 6V11M15 1 10.500 6M45 43 54 52M54 43 45 52" stroke="#333" strokeWidth="1.200" /></Svg></Float>
              <Float $l={20} $t={161}><Round $soft aria-label="上一张"><Svg w={12} h={16}><path d="M9 2 3 8 9 14" stroke="#fff" strokeWidth="1.500" /></Svg></Round></Float>
              <Float $r={15} $t={161}><Round aria-label="下一张"><Svg w={12} h={16}><path d="M4 1 11 8 4 15" stroke="#fff" strokeWidth="1.500" /></Svg></Round></Float>

              <Command $l={200} $b={0}>
                <CommandGrip>
                  <Svg w={5} h={14}><path d="M1 0V14M4 0V14" strokeDasharray="1 1" stroke="#ccc" strokeWidth="1.500" /></Svg>
                  <Svg w={9} h={9}><path d="M1.500 1.500 7.500 7.500M7.500 1.500 1.500 7.500" stroke="#fff" strokeWidth="1.500" /></Svg>
                  <Svg w={12} h={12}><path d="M1 11 7 5" stroke="#fff" strokeWidth="2" /><path d="M10.500 2.500A2.500 2.500 0 1 1 8.500 1" stroke="#fff" strokeWidth="1.800" /></Svg>
                </CommandGrip>
                <Svg w={25} h={18}><rect x="3.500" y="5.500" width="10" height="8" stroke="#777" /><path d="M3 6.500H14" stroke="#777" strokeWidth="2" /><path d="M5.500 9 7 10.500 5.500 12M8 12H11" stroke="#777" /><path d="M16 8H21L18.500 11Z" fill="#666" stroke="none" /></Svg>
                <CommandInput aria-label="命令" placeholder="键入命令" />
              </Command>
              <Float $l={477} $b={17}><RedSearch aria-label="搜索图片"><Svg w={17} h={17}><circle cx="7.500" cy="7.500" r="6" stroke="#fff" strokeWidth="1.500" /><path d="M12 12 15.500 15.500" stroke="#fff" strokeWidth="2" /></Svg></RedSearch></Float>
            </Canvas>
          </CanvasRow>

          <LayoutTabs>
            <LayoutTab $on $w={34}>模型</LayoutTab>
            <LayoutTab $w={34}>布局1</LayoutTab>
            <LayoutTab $w={42}>布局2</LayoutTab>
            <LayoutTab $w={18} aria-label="新建布局">+</LayoutTab>
          </LayoutTabs>
          <Status>
            <Coords>2394.4285, 1066.0514, 0.0000</Coords>
            {status.map((s, i) => (typeof s === 'number'
              ? <Gap key={i} $w={s} />
              : <StatusButton key={i} $w={s.w} $on={s.on} aria-label={typeof s.el === 'string' ? s.el : `状态 ${i}`}>{s.el}</StatusButton>))}
          </Status>
        </Cad>
      </Desktop>

      <Taskbar>
        <Task $w={38} aria-label="开始"><Orb /></Task>
        <Task $w={44} aria-label="四叶草"><Petals /></Task>
        <WebSearch onSubmit={(e) => e.preventDefault()}>
          <IeLogo s={13} />
          <WebInput aria-label="网页搜索" defaultValue="烈火军校" />
          <WebGo>搜一下</WebGo>
        </WebSearch>
        <Task $w={42} $open aria-label="浏览器"><IeLogo s={24} /></Task>
        <Task $w={45} aria-label="资源管理器"><Folder /></Task>
        <Task $w={45} aria-label="音乐"><Music /></Task>
        <Task $w={47} aria-label="播放器"><Player /></Task>
        <Task $w={42} $open aria-label="极速浏览器"><Swirl /></Task>
        <Task $w={42} $open $hot aria-label="百度"><BaiduDot /></Task>
        <Task $w={43} $open aria-label="Autodesk"><Autodesk /></Task>
        <Task $w={42} $open aria-label="AutoCAD"><AcadA /></Task>
        <Task $w={42} $open aria-label="软件管家"><Clover /></Task>
        <Task $w={42} $open aria-label="Chrome"><Chrome /></Task>
        <Task $w={42} $open aria-label="微信"><Wechat /></Task>
        <Tray>
          <Svg w={13} h={13}><rect x="1" y="4" width="11" height="6" fill="#aaa29a" stroke="none" /><path d="M2 6H11M2 8H11" stroke="#6d645c" strokeDasharray="1 1" /></Svg>
          <Gap $w={3} />
          {tray.map(([n, el]) => <React.Fragment key={n}>{el}</React.Fragment>)}
          <Clock dateTime="2019-09-17T14:56"><span>14:56</span><span>2019/9/17</span></Clock>
          <ShowDesktop aria-label="显示桌面" />
        </Tray>
      </Taskbar>
      <Base />

      <Float $l={18} $t={66}>
        <Svg w={108} h={118}><path d="M2 1 20 6 15 10 59 58 106 115 104 115 50 59 8 16 5 20Z" fill="#fb2a17" stroke="none" /></Svg>
      </Float>
      <Float $r={0} $t={260}>
        <Svg w={36} h={72}>
          <path d="M3 3H33V15H24L19 20 17 15H3Z" fill="#fbd0d0" stroke="none" />
          <g stroke="none" fill="#7ed321"><circle cx="27" cy="36" r="12" /><circle cx="16" cy="43" r="3" /></g>
          <path d="M22 27 20 23M31 25 31 21" stroke="#5aa818" /><circle cx="19" cy="23" r="2" fill="#7ed321" stroke="none" /><circle cx="31" cy="21" r="2" fill="#7ed321" stroke="none" />
          <path d="M20 31 24 33 21 35M32 29 28 32 32 34" stroke="#31610d" /><ellipse cx="25" cy="38" rx="2" ry="3" fill="#f9a8a0" stroke="none" />
          <path d="M7 30 12 35M11 27 14 31" stroke="#c02d2d" strokeWidth="3" />
          <circle cx="37" cy="54" r="17" fill="#d9251c" stroke="#fff" strokeWidth="2" />
          <text x="18" y="11" fontSize="7" fontWeight="700" textAnchor="middle" fill="#d21c1c" stroke="none">点我加速</text>
          <text x="29" y="57" fontSize="9" fontWeight="700" textAnchor="middle" fill="#fff" stroke="none">91</text>
        </Svg>
      </Float>
      <Watermark>
        <Brand>
          <span>Bai</span>
          <Paw>
            <Svg w={56} h={58}><g fill="#fdfdfb" stroke="#cfcfcc"><ellipse cx="13" cy="24" rx="7" ry="9" /><ellipse cx="26" cy="11" rx="7" ry="9.500" /><ellipse cx="42" cy="12" rx="7" ry="9.500" /><ellipse cx="49" cy="28" rx="6" ry="8.500" /><path d="M32 25C39 25 41 33 48 39C57 46 54 57 45 57H19C9 57 6 46 15 39C22 33 24 25 32 25Z" fill="#e6e6e6" /></g></Svg>
            <Du>du</Du>
          </Paw>
          <BrandCjk>经验</BrandCjk>
        </Brand>
        <Site>jingyan.baidu.com</Site>
      </Watermark>
    </Page>
  );
}
